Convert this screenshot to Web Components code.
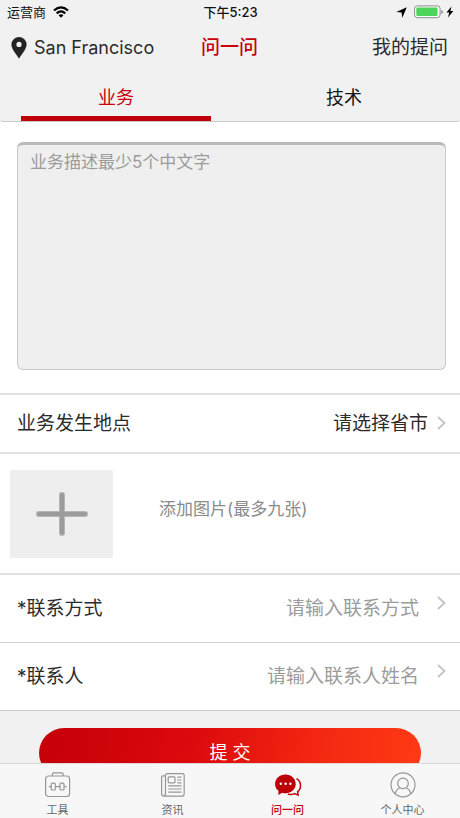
<!DOCTYPE html>
<html lang="zh-CN">
<head>
<meta charset="utf-8">
<meta name="viewport" content="width=device-width, initial-scale=1">
<title>问一问</title>
<style>
  html, body { margin: 0; height: 100%; }
  body {
    --red: #c7000b;
    --ink: #2b2b2b;
    --mute: #9b9b9b;
    --panel: #f1f1f1;
    font-family: Inter, "Noto Sans CJK SC", sans-serif;
    color: var(--ink);
    background: var(--panel);
  }
</style>
</head>
<body>
<ask-app>
  <status-bar slot="top" carrier="运营商" time="下午5:23"></status-bar>
  <page-header slot="top">
    <span slot="place">San Francisco</span>
    <span slot="title">问一问</span>
    <span slot="action">我的提问</span>
  </page-header>
  <topic-tabs slot="top">
    <topic-tab selected>业务</topic-tab>
    <topic-tab>技术</topic-tab>
  </topic-tabs>

  <question-box label="业务描述" placeholder="业务描述最少5个中文字"></question-box>
  <place-row prompt="请选择省市">业务发生地点</place-row>
  <photo-row>添加图片(最多九张)</photo-row>
  <field-row type="tel" prompt="请输入联系方式">*联系方式</field-row>
  <field-row type="text" prompt="请输入联系人姓名">*联系人</field-row>
  <submit-bar>提 交</submit-bar>

  <tab-bar slot="bottom">
    <tab-item icon="tools">工具</tab-item>
    <tab-item icon="news">资讯</tab-item>
    <tab-item icon="chat" current>问一问</tab-item>
    <tab-item icon="user">个人中心</tab-item>
  </tab-bar>
</ask-app>

<script>
const base = `:host,*{box-sizing:border-box} button,input,select,textarea{font:inherit;color:inherit;margin:0;border:0;background:none;border-radius:0} svg{display:block;flex:none}`;
const chevron = `<svg class="chevron" width="9" height="14" viewBox="0 0 9 14" fill="none" stroke="#c4c4c8" stroke-width="1.8" aria-hidden="true"><path d="M1 1l6.500 6L1 13"/></svg>`;

function define(name, css, html) {
  customElements.define(name, class extends HTMLElement {
    constructor() {
      super();
      this.attachShadow({ mode: "open" });
    }
    connectedCallback() {
      const get = (key) => this.getAttribute(key) || "";
      this.shadowRoot.innerHTML = `<style>${base}${css}</style>` + (typeof html === "function" ? html(get, this) : html);
    }
  });
}

define("ask-app", `
  :host{display:flex;flex-direction:column;height:100vh;overflow:hidden}
  header{flex:none}
  main{flex:1;min-height:0;overflow-y:auto;scrollbar-width:none}
`, `<header><slot name="top"></slot></header><main><slot></slot></main><slot name="bottom"></slot>`);

define("status-bar", `
  :host{display:grid;grid-template-columns:1fr auto 1fr;align-items:center;height:24px;padding:0 6px 0 7px;font-size:13px;line-height:24px;color:#111}
  .left,.right{display:flex;align-items:center;gap:7px}
  .right{justify-content:flex-end}
  .time{font-weight:500}
`, (get) => `
  <span class="left">${get("carrier")}
    <svg width="16" height="12" viewBox="0 0 16 12" fill="none" stroke="#000" stroke-width="2.300" aria-hidden="true"><path d="M1 4.500Q8-1.800 15 4.500M3.700 7.300Q8 3.400 12.300 7.300"/><path d="M8 11.800L5.600 9.300Q8 7.300 10.400 9.300Z" fill="#000" stroke="none"/></svg>
  </span>
  <span class="time">${get("time")}</span>
  <span class="right">
    <svg width="11" height="11" viewBox="0 0 11 11" aria-hidden="true"><path d="M10.800.3L6.300 10.800L5.600 5.500L.3 4.900Z" fill="#000"/></svg>
    <svg width="40" height="14" viewBox="0 0 40 14" aria-hidden="true"><rect x=".6" y=".9" width="25.500" height="11.800" rx="2.800" fill="#f8fff8" stroke="#8c8c8c"/><rect x="2.300" y="2.600" width="21.200" height="8.400" rx="1.200" fill="#4cd55b"/><path d="M27.300 5v4q1.700-.5 1.700-2t-1.700-2Z" fill="#8c8c8c"/><path d="M37.500 1.400L32.400 7.600h2.900L33.900 12.600L39.400 6.100h-3Z" fill="#000"/></svg>
  </span>`);

define("page-header", `
  :host{display:grid;grid-template-columns:1fr auto 1fr;align-items:center;height:46px;padding:2px 12px 0 11px;font-size:19px;line-height:28px}
  button{display:flex;align-items:center;gap:7px;padding:0;cursor:pointer;white-space:nowrap}
  .place{font-size:18px}
  h1{margin:0;font-size:19px;font-weight:500;color:var(--red)}
  .action{justify-self:end}
`, `
  <button type="button" class="place">
    <svg width="16" height="22" viewBox="0 0 16 22" aria-hidden="true"><path fill-rule="evenodd" d="M8 0a7.600 7.600 0 0 1 7.600 7.600C15.600 12.500 10.500 17 8 21.800C5.500 17 .4 12.500.4 7.600A7.600 7.600 0 0 1 8 0ZM8 4.800a2.600 2.600 0 1 0 0 5.200a2.600 2.600 0 0 0 0-5.200Z" fill="#242424"/></svg>
    <slot name="place"></slot>
  </button>
  <h1><slot name="title"></slot></h1>
  <button type="button" class="action"><slot name="action"></slot></button>`);

define("topic-tabs", `
  :host{display:block;background:#fff}
  nav{display:flex;height:52px;padding:0 2px;background:var(--panel);border-bottom:1px solid #c9c9c9;border-radius:0 0 3px 3px}
`, `<nav><slot></slot></nav>`);

define("topic-tab", `
  :host{display:flex;flex:1;padding:0 19px;font-size:18px;color:#151515}
  button{flex:1;padding:0;line-height:28px;border-bottom:5px solid transparent;cursor:pointer}
  :host([selected]) button{color:var(--red);border-color:#bf0008}
  span{display:block;padding-top:10px}
`, `<button type="button"><span><slot></slot></span></button>`);

define("question-box", `
  :host{display:block;padding:20px 14px 23px 17px;background:#fff;border-bottom:2px solid #e1e1e1}
  textarea{display:block;width:100%;height:228px;padding:4px 12px;font-size:17px;line-height:26px;resize:none;background:#efefef;border:1px solid #c9c9c9;border-top:3px solid #bababa;border-radius:6px;outline:0}
  textarea::placeholder{color:var(--mute);opacity:1}
`, (get) => `<textarea aria-label="${get("label")}" placeholder="${get("placeholder")}"></textarea>`);

define("place-row", `
  :host{display:flex;align-items:center;height:59px;padding:0 14px 0 17px;background:#fff;border-bottom:2px solid #e1e1e1;font-size:19px;line-height:28px}
  label{flex:none}
  select{flex:1;min-width:0;appearance:none;padding:0;text-align-last:right;outline:0;cursor:pointer}
  .chevron{margin:0 0 2px 9px}
`, (get) => `<label for="place"><slot></slot></label><select id="place"><option>${get("prompt")}</option></select>${chevron}`);

define("photo-row", `
  :host{display:flex;align-items:flex-start;gap:46px;padding:16px 10px 15px;background:#fff;border-bottom:2px solid #e1e1e1;font-size:17px;line-height:26px;color:#8b8b8b}
  button{display:grid;place-items:center;flex:none;width:103px;height:88px;padding:0;background:#eee;border-radius:2px;cursor:pointer}
  label{padding-top:26px}
`, `
  <button type="button" id="add" aria-label="添加图片">
    <svg width="54" height="46" viewBox="0 0 54 46" fill="none" stroke-linecap="round" aria-hidden="true"><g stroke="#b5b5b5" stroke-width="6"><path d="M4 23H50M27 4V42"/></g><g stroke="#9b9b9b" stroke-width="4"><path d="M4 23H50M27 4V42"/></g></svg>
  </button>
  <label for="add"><slot></slot></label>`);

define("field-row", `
  :host{display:flex;align-items:center;height:68px;padding:0 14px 0 17px;background:#fff;border-bottom:1px solid #cfcfcf;font-size:19px;line-height:28px}
  label{flex:none}
  input{flex:1;min-width:0;padding:0;text-align:right;outline:0}
  input::placeholder{color:var(--mute);opacity:1}
  .chevron{margin:0 0 12px 18px}
`, (get) => `<label for="field"><slot></slot></label><input id="field" type="${get("type")}" placeholder="${get("prompt")}">${chevron}`);

define("submit-bar", `
  :host{display:block;padding:17px 39px 16px;background:var(--panel)}
  button{display:block;width:100%;height:50px;padding:0;font-size:18px;line-height:50px;color:#fff;border-radius:25px;background:linear-gradient(100deg,#c8000a 5%,#dc0a0d 40%,#f52a12 75%,#ff3a14);cursor:pointer}
`, `<button type="submit"><slot></slot></button>`);

define("tab-bar", `
  :host{display:block;flex:none}
  nav{display:flex;height:55px;background:#f7f7f7;border-top:1px solid #dadada}
`, `<nav><slot></slot></nav>`);

const icons = {
  tools: `<g stroke="#969696" stroke-width="1.200"><rect x="1.600" y="5" width="24" height="20.500" rx="3"/><path d="M8.300 5V3.200Q8.300 1.800 9.700 1.800H17.700Q19.100 1.800 19.100 3.200V5M4.800 15.600H7.300M11.300 15.600H16M20 15.600H22.500"/><rect x="7.300" y="12.200" width="4" height="6.800" rx="1"/><rect x="16" y="12.200" width="4" height="6.800" rx="1"/></g>`,
  news: `<g stroke="#969696" stroke-width="1.200"><path d="M6.500 4.900H4Q2.600 4.900 2.600 6.300V22.500Q2.600 25.200 5.300 25.200H22.700Q25.200 25.200 25.200 22.700V4.500Q25.200 2.600 23.300 2.600H8.400Q6.500 2.600 6.500 4.500V22.600Q6.500 25.200 4.600 25.200"/><rect x="9.200" y="5.800" width="6.800" height="6" rx="1"/><path d="M18.300 6.200H22.500M18.300 9H22.500M18.300 11.800H22.500M9.200 14.900H22.500M9.200 18H22.500M9.200 21.100H22.500"/></g>`,
  chat: `<path d="M11.500 3.600C17.200 3.600 21.700 7.700 21.700 12.900S17.200 22.200 11.500 22.200Q9.800 22.200 8.200 21.700L4.300 24L4.500 19.800Q1.100 17.200 1.100 12.900C1.100 7.700 5.800 3.600 11.500 3.600Z" fill="#bd0008"/><path d="M22.500 7.700C27.300 10.200 28 17.300 23.600 20.700L24.100 24.100L20.500 22.600Q17.200 24.300 13.900 23" stroke="#bd0008" stroke-width="1.500"/><g fill="#fff"><circle cx="6.800" cy="12.800" r="1.200"/><circle cx="11.600" cy="12.800" r="1.200"/><circle cx="16.400" cy="12.800" r="1.200"/></g>`,
  user: `<g stroke="#969696" stroke-width="1.200"><circle cx="14" cy="13.800" r="12"/><circle cx="14" cy="12.400" r="5.300"/><path d="M6.200 22.800Q7.100 18.400 10.800 17M17.200 17Q20.900 18.400 21.800 22.800"/></g>`
};

define("tab-item", `
  :host{display:flex;flex:1;font-size:11px;color:#666}
  a{flex:1;display:flex;flex-direction:column;align-items:center;padding-top:7px;color:inherit;text-decoration:none;line-height:16px;gap:4px}
  :host([current]){color:#c4000b;font-weight:500}
`, (get) => `<a href="#${get("icon")}"><svg width="28" height="27" viewBox="0 0 28 27" fill="none" aria-hidden="true">${icons[get("icon")]}</svg><slot></slot></a>`);
</script>
</body>
</html>
